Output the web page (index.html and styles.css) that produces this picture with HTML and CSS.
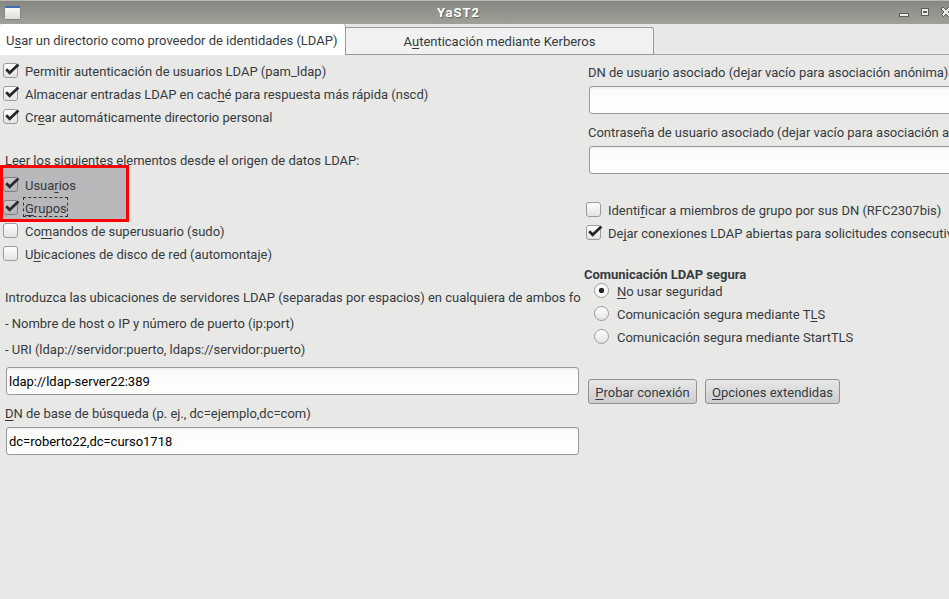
FILE: index.html
```html
<!DOCTYPE html>
<html lang="es">
<head>
<meta charset="utf-8">
<title>YaST2</title>
<link rel="stylesheet" href="styles.css">
</head>
<body>
<svg class="defs" width="0" height="0"><defs>
<symbol id="tick" viewBox="0 0 17 15"><path d="M3.200 6.300 6.700 9.800 15.400 1.600" fill="none" stroke="#24282b" stroke-width="2.7"/></symbol>
</defs></svg>
<header class="titlebar">
  <svg class="app-icon" width="18" height="16" viewBox="0 0 18 16"><defs><linearGradient id="g" x2="0" y2="1"><stop stop-color="#fff"/><stop offset="1" stop-color="#dcddda"/></linearGradient></defs><rect x=".5" y=".5" width="16" height="14" rx="1" fill="url(#g)" stroke="#81867e"/><path d="M1 2h15" stroke="#416fb5" stroke-width="2"/></svg>
  <h1>YaST2</h1>
  <svg class="controls" width="50" height="16" viewBox="899 4 50 16" shape-rendering="crispEdges">
    <rect x="899.5" y="13.5" width="9" height="3" fill="#eceee9" stroke="#5c5f59"/>
    <rect x="921.5" y="8.5" width="7" height="7" fill="#eceee9" stroke="#5c5f59"/><rect x="923.5" y="11.5" width="3" height="1" fill="#989b94" stroke="#5c5f59"/>
    <path d="M942 8 950 16M950 8 942 16" stroke="#5c5f59" stroke-width="4"/><path d="M942.5 8.500 949.500 15.500M949.500 8.500 942.500 15.500" stroke="#eceee9" stroke-width="2"/>
  </svg>
</header>
<nav class="tabs">
  <div class="tab active"><span>U<u>s</u>ar un directorio como proveedor de identidades (LDAP)</span></div>
  <div class="tab"><span>A<u>u</u>tenticación mediante Kerberos</span></div>
</nav>
<main>
  <section class="left">
    <label class="row"><i class="box"><svg><use href="#tick"/></svg></i><span>Permitir autenticación de usuarios LDAP (pam_ldap)</span></label>
    <label class="row"><i class="box"><svg><use href="#tick"/></svg></i><span>Almacenar entradas LDAP en cac<u>h</u>é para respuesta más rápida (nscd)</span></label>
    <label class="row"><i class="box"><svg><use href="#tick"/></svg></i><span>Cr<u>e</u>ar automáticamente directorio personal</span></label>
    <p class="text sources">Leer los siguientes elementos desde el origen de datos LDAP:</p>
    <div class="group">
      <label class="row"><i class="box"><svg><use href="#tick"/></svg></i><span>Usua<u>r</u>ios</span></label>
      <label class="row"><i class="box"><svg><use href="#tick"/></svg></i><span class="focus"><u>G</u>rupos</span></label>
      <div class="highlight"></div>
    </div>
    <label class="row"><i class="box"></i><span>Co<u>m</u>andos de superusuario (sudo)</span></label>
    <label class="row"><i class="box"></i><span>U<u>b</u>icaciones de disco de red (automontaje)</span></label>
    <div class="notes">
      <p class="text">Introduzca las ubicaciones de servidores LDAP (separadas por espacios) en cualquiera de ambos fo</p>
      <p class="text">- Nombre de host o IP y número de puerto (ip:port)</p>
      <p class="text">- URI (ldap://servidor:puerto, ldaps://servidor:puerto)</p>
    </div>
    <div class="field">ldap://ldap-server22:389</div>
    <p class="text base"><u>D</u>N de base de búsqueda (p. ej., dc=ejemplo,dc=com)</p>
    <div class="field">dc=roberto22,dc=curso1718</div>
  </section>
  <section class="right">
    <p class="text first">DN de usuar<u>i</u>o asociado (dejar vacío para asociación anónima)</p>
    <div class="field"></div>
    <p class="text second">Contraseña de usuario asociado (dejar vacío para asociación a</p>
    <div class="field"></div>
    <div class="options">
      <label class="row"><i class="box"></i><span>Identi<u>f</u>icar a miembros de grupo por sus DN (RFC2307bis)</span></label>
      <label class="row"><i class="box"><svg><use href="#tick"/></svg></i><span>De<u>j</u>ar conexiones LDAP abiertas para solicitudes consecutiv</span></label>
    </div>
    <h2>Comunicación LDAP segura</h2>
    <div class="radios">
      <label class="row"><i class="radio on"></i><span><u>N</u>o usar seguridad</span></label>
      <label class="row"><i class="radio"></i><span>Comunicación segura mediante T<u>L</u>S</span></label>
      <label class="row"><i class="radio"></i><span>Comunicación segura mediante StartTLS</span></label>
    </div>
    <div class="buttons">
      <button class="test"><u>P</u>robar conexión</button>
      <button class="more"><u>O</u>pciones extendidas</button>
    </div>
  </section>
</main>
</body>
</html>
```
FILE: styles.css
```css
* { box-sizing: border-box; }
body {
  margin: 0;
  width: 949px;
  height: 599px;
  overflow: hidden;
  background: #e8e8e6;
  color: #363b3f;
  font: 13px/23px Roboto, sans-serif;
  letter-spacing: -0.015px;
  white-space: nowrap;
}
p, h1, h2 { margin: 0; }
u { text-decoration: underline 1px; text-underline-offset: 2px; text-decoration-skip-ink: none; }
.defs { position: absolute; }
.titlebar {
  display: grid;
  grid-template-columns: 4px 18px 1fr 50px;
  height: 24px;
  padding-top: 4px;
  border-top: 1px solid #b4b8b0;
  background: linear-gradient(#858881, #9fa199);
}
.titlebar .app-icon { grid-column: 2; }
.titlebar h1 {
  padding-right: 4px;
  text-align: center;
  font-size: 13px;
  line-height: 15px;
  letter-spacing: 1px;
  color: #fff;
  text-shadow: 1px 1px 1px #60635d;
}
.titlebar .controls { margin-top: -1px; }
.tabs { display: flex; align-items: flex-end; height: 31px; box-shadow: inset 0 -1px #a6a6a4; }
.tab {
  width: 308px;
  height: 28px;
  border: 1px solid #989898;
  border-left: 0;
  border-radius: 0 3px 0 0;
  background: #f1f1f1;
  text-align: center;
  line-height: 27px;
}
.tab.active { width: 346px; height: 31px; padding-left: 6px; border-top: 0; border-bottom: 0; border-radius: 3px 3px 0 0; background: #fff; text-align: left; line-height: 33px; }
main { display: flex; padding-top: 5px; }
.left { width: 584px; }
.right { width: 365px; overflow: hidden; }
.row { display: flex; height: 23px; padding-left: 3px; }
.box, .radio {
  flex: none;
  width: 15px;
  height: 15px;
  margin: 3px 7px 0 0;
  border: 1px solid #9b9b99;
  border-radius: 3px;
  background: linear-gradient(#fff, #e3e3e3);
}
.box svg { display: block; width: 17px; height: 15px; margin: -1px; overflow: visible; }
.radio { border-radius: 50%; margin-right: 8px; }
.radio.on { background: radial-gradient(circle, #24282b 2.3px, #fafafa 3.1px); }
.text { padding-left: 5px; height: 26px; line-height: 26px; }
.sources { margin-top: 19px; }
.group { position: relative; }
.focus { width: 45px; height: 20px; line-height: 21px; margin: 0 0 0 -2px; padding-left: 1px; border: 1px dashed #31363a; }
.highlight { position: absolute; left: 0; top: -9px; width: 129px; height: 57px; border: 3px solid red; background: rgba(55, 55, 65, 0.27); }
.notes { margin: 19px 0 4px; }
.field {
  width: 573px;
  height: 28px;
  margin-left: 6px;
  padding-left: 2px;
  border: 1px solid #989896;
  border-radius: 3px;
  background: linear-gradient(#eee, #fbfbfb 3px, #fff);
  color: #000;
  line-height: 28px;
}
.base { margin: 6px 0 0; }
.right .text { padding-left: 4px; }
.right .field { width: 380px; margin-left: 5px; }
.second { margin: 6px 0 0; }
.options { margin-top: 25px; }
.options .row { padding-left: 2px; }
h2 { margin-top: 20px; height: 15px; font-size: 13px; line-height: 20px; }
.radios .row { padding-left: 10px; }
.buttons { display: flex; gap: 8px; padding: 30px 0 0 4px; }
button {
  height: 25px;
  padding: 2px 0 0;
  border: 1px solid #91918f;
  border-radius: 3px;
  background: linear-gradient(#e7e7e7, #cdcdcd);
  color: inherit;
  font: inherit;
  line-height: 20px;
}
.test { width: 109px; }
.more { width: 135px; }
```
